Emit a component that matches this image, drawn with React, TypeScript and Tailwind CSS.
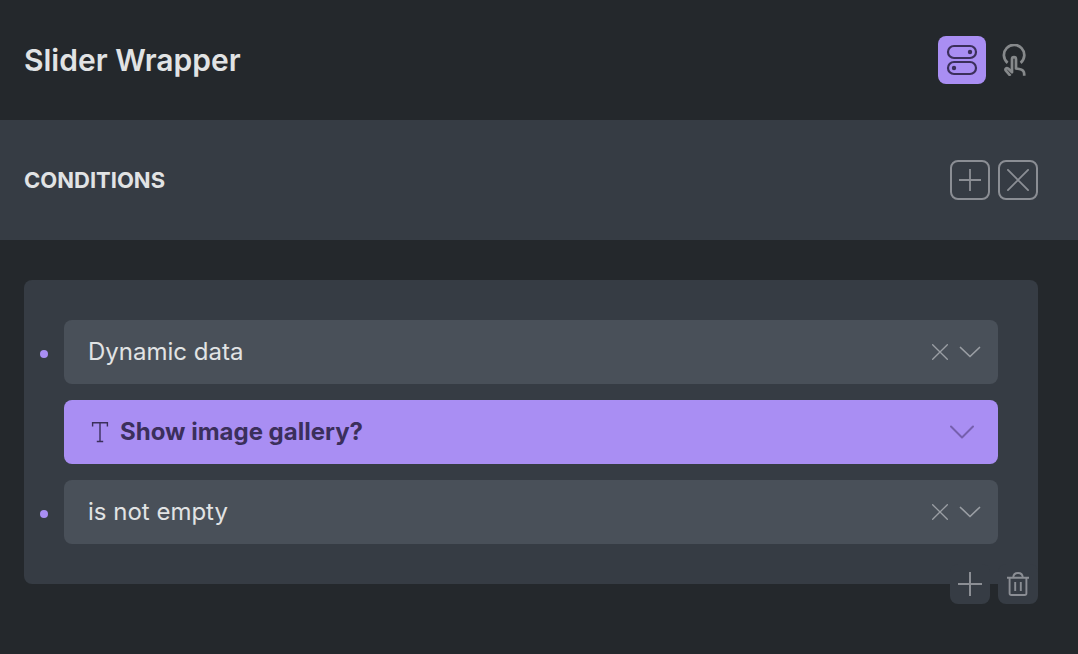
import { useState, type ReactNode } from "react";

type SelectRowProps = {
  label: string;
  value: string;
  options: string[];
  onChange: (value: string) => void;
  onClear: () => void;
};

function PlusIcon({ className }: { className: string }) {
  return (
    <svg viewBox="0 0 24 24" className={className} fill="none" stroke="currentColor" strokeWidth="2" aria-hidden="true">
      <path d="M12 0v24M0 12h24" />
    </svg>
  );
}

function CrossIcon({ className, strokeWidth }: { className: string; strokeWidth: number }) {
  return (
    <svg viewBox="0 0 24 24" className={className} fill="none" stroke="currentColor" strokeWidth={strokeWidth} strokeLinecap="round" aria-hidden="true">
      <path d="M1 1l22 22M23 1l-22 22" />
    </svg>
  );
}

function TogglesIcon() {
  return (
    <svg viewBox="0 0 32 32" className="size-8" fill="none" stroke="currentColor" strokeWidth="2.2" aria-hidden="true">
      <rect x="2" y="2" width="28" height="12" rx="6" />
      <rect x="2" y="18" width="28" height="12" rx="6" />
      <circle cx="24" cy="8" r="2.2" fill="currentColor" stroke="none" />
      <circle cx="8" cy="24" r="2.2" fill="currentColor" stroke="none" />
    </svg>
  );
}

function TouchIcon() {
  return (
    <svg viewBox="0 0 32 32" className="size-8" fill="none" stroke="currentColor" strokeWidth="2.7" strokeLinejoin="round" aria-hidden="true">
      <path d="M9.6 18.9A10.2 10.2 0 1 1 22.6 18.9" />
      <path d="M12.4 31.8L7.9 26.6c-1.2-1.6.6-3.3 2.2-2l3.9 3.6V15.2c0-2.8 4-2.8 4 0v9.3l3.2.5c3.4.5 5 2.2 5 5v1.8" />
    </svg>
  );
}

function TrashIcon() {
  return (
    <svg viewBox="0 0 24 24" className="size-6" fill="none" stroke="currentColor" strokeWidth="1.9" aria-hidden="true">
      <path d="M1 5.8h22M7.2 5.6C7.4 2.6 9.3 1 12 1s4.6 1.6 4.8 4.6" />
      <path d="M3.6 5.8v15.4c0 1.1.7 1.8 1.8 1.8h13.2c1.1 0 1.8-.7 1.8-1.8V5.8M9.2 10v9M14.8 10v9" />
    </svg>
  );
}

function TextFieldIcon() {
  return (
    <svg viewBox="0 0 24 24" className="size-6" fill="none" stroke="currentColor" strokeWidth="1.4" aria-hidden="true">
      <path d="M4.6 6.6V2.7h14.8v3.9M12 2.7v18.8M8.8 21.5h6.4" />
    </svg>
  );
}

function SelectRow({ label, value, options, onChange, onClear }: SelectRowProps) {
  return (
    <div className="flex items-center gap-4">
      <span className="mt-1 size-2 shrink-0 rounded-full bg-[#a98ef3]" />
      <div className="relative flex-1">
        <select
          aria-label={label}
          value={value}
          onChange={(e) => onChange(e.target.value)}
          className="block h-16 w-full appearance-none rounded-lg bg-[#495059] pr-24 pl-6 text-2xl text-[#e1e3e4]"
        >
          {options.map((option) => (
            <option key={option}>{option}</option>
          ))}
        </select>
        <div className="pointer-events-none absolute inset-y-0 right-4 flex items-center gap-2 text-[#9a9ea4]">
          <button type="button" aria-label={`Clear ${label}`} onClick={onClear} className="pointer-events-auto flex size-5 items-center justify-center">
            <CrossIcon className="size-4" strokeWidth={2} />
          </button>
          <svg viewBox="0 0 24 24" className="size-6" fill="none" stroke="currentColor" strokeWidth="1.7" strokeLinecap="round" strokeLinejoin="round" aria-hidden="true">
            <path d="M2.5 7.5l9.5 9 9.5-9" />
          </svg>
        </div>
      </div>
    </div>
  );
}

function OutlineButton({ label, children }: { label: string; children: ReactNode }) {
  return (
    <button type="button" aria-label={label} className="flex size-10 items-center justify-center rounded-lg border-2 border-[#8b8e94] text-[#8b8e94]">
      {children}
    </button>
  );
}

export default function App() {
  const [source, setSource] = useState("Dynamic data");
  const [field, setField] = useState("Show image gallery?");
  const [compare, setCompare] = useState("is not empty");

  return (
    <main className="min-h-screen bg-[#24282c] font-['Inter',sans-serif] text-[#e1e3e4]">
      <header className="flex h-30 items-center justify-between pr-10 pl-6">
        <h1 className="text-[30px] leading-10 font-semibold">Slider Wrapper</h1>
        <div className="flex gap-1">
          <button type="button" aria-label="Conditions" className="flex size-12 items-center justify-center rounded-lg bg-[#a98ef3] text-[#3b2f5b]">
            <TogglesIcon />
          </button>
          <button type="button" aria-label="Interactions" className="flex size-12 items-center justify-center rounded-lg text-[#86898b]">
            <TouchIcon />
          </button>
        </div>
      </header>

      <section className="flex h-30 items-center justify-between bg-[#363c44] pr-10 pl-6">
        <h2 className="text-[22px] leading-8 font-bold uppercase">Conditions</h2>
        <div className="flex gap-2">
          <OutlineButton label="Add condition set">
            <PlusIcon className="size-[22px]" />
          </OutlineButton>
          <OutlineButton label="Remove all conditions">
            <CrossIcon className="size-[22px]" strokeWidth={2} />
          </OutlineButton>
        </div>
      </section>

      <section className="py-10 pr-10 pl-6">
        <div className="relative flex flex-col gap-4 rounded-lg bg-[#363c44] py-10 pr-10 pl-4">
          <SelectRow
            label="Condition type"
            value={source}
            options={["", "Dynamic data"]}
            onChange={setSource}
            onClear={() => setSource("")}
          />

          <div className="relative ml-6 text-[#3b2f5b]">
            <select
              aria-label="Field"
              value={field}
              onChange={(e) => setField(e.target.value)}
              className="block h-16 w-full appearance-none rounded-lg bg-[#a98ef3] pr-16 pl-14 text-2xl font-bold"
            >
              <option>Show image gallery?</option>
            </select>
            <div className="pointer-events-none absolute inset-0 flex items-center justify-between px-6">
              <TextFieldIcon />
              <svg viewBox="0 0 24 24" className="size-6 text-[#765fae]" fill="none" stroke="currentColor" strokeWidth="2" strokeLinecap="round" strokeLinejoin="round" aria-hidden="true">
                <path d="M1 6.5l11 11 11-11" />
              </svg>
            </div>
          </div>

          <SelectRow
            label="Comparison"
            value={compare}
            options={["", "is not empty"]}
            onChange={setCompare}
            onClear={() => setCompare("")}
          />

          <div className="absolute right-0 -bottom-5 flex gap-2 text-[#8b8e94]">
            <button type="button" aria-label="Add condition" className="flex size-10 items-center justify-center rounded-lg bg-[#363c44]">
              <PlusIcon className="size-6" />
            </button>
            <button type="button" aria-label="Delete condition" className="flex size-10 items-center justify-center rounded-lg bg-[#363c44]">
              <TrashIcon />
            </button>
          </div>
        </div>
      </section>
    </main>
  );
}
